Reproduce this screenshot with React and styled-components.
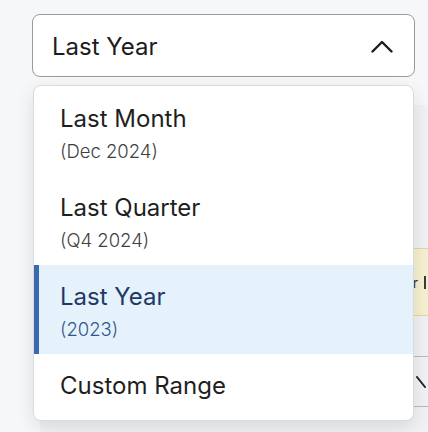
import React, { useState } from 'react';
import styled, { createGlobalStyle } from 'styled-components';

const GlobalStyle = createGlobalStyle`
  html, body {
    margin: 0;
    height: 432px;
    overflow: hidden;
    background: #f6f7f9;
    font-family: Inter, "Noto Sans", "Liberation Sans", sans-serif;
  }
`;

const Page = styled.div`
  padding: 14px 0 0 32px;
`;

const Select = styled.div`
  position: relative;
  width: 383px;
  z-index: 2;
`;

const Trigger = styled.button`
  box-sizing: border-box;
  width: 100%;
  height: 63px;
  display: flex;
  align-items: center;
  justify-content: space-between;
  padding: 2px 21px 0 19px;
  background: #fff;
  border: 1px solid #999a9c;
  border-radius: 8px;
  font-family: inherit;
  font-size: 24px;
  color: #1c1c1c;
  cursor: pointer;
`;

const Menu = styled.ul`
  position: absolute;
  top: 71px;
  left: 1px;
  width: 381px;
  box-sizing: border-box;
  margin: 0;
  padding: 1px 0 0;
  list-style: none;
  background: #fff;
  border: 1px solid #dadbdd;
  border-radius: 8px;
  box-shadow: 0 6px 18px rgba(0, 0, 0, 0.1);
  overflow: hidden;
`;

const Option = styled.li`
  position: relative;
  padding: 17px 20px 14px 26px;
  background: ${(p) => (p.$active ? '#e5f2fc' : 'transparent')};
  cursor: pointer;

  &:last-child {
    padding-top: 17px;
    padding-bottom: 19px;
  }

  &::before {
    content: '';
    display: ${(p) => (p.$active ? 'block' : 'none')};
    position: absolute;
    left: 0;
    top: 0;
    bottom: 0;
    width: 5px;
    background: #3c68ac;
  }
`;

const Title = styled.div`
  font-size: 24px;
  line-height: 30px;
  color: ${(p) => (p.$active ? '#1f3966' : '#1f1f1f')};
`;

const Sub = styled.div`
  margin-top: 6px;
  font-size: 18.5px;
  font-weight: 300;
  line-height: 22px;
  color: ${(p) => (p.$active ? '#34568c' : '#3f3f3f')};
`;

const Panel = styled.div`
  margin: 28px 0 0 8px;
  height: 340px;
  background: #f0f1f3;
`;

const TableRow = styled.div`
  box-sizing: border-box;
  display: flex;
  justify-content: flex-end;
  align-items: center;
  gap: 6px;
  padding-right: 2px;
  height: ${(p) => p.$h}px;
  background: ${(p) => p.$bg || 'transparent'};
  border-top: ${(p) => (p.$line ? `1px solid ${p.$line}` : 'none')};
  border-bottom: ${(p) => (p.$lineBottom ? `1px solid ${p.$lineBottom}` : 'none')};
  font-size: 14px;
  color: #333;
`;

const Cursor = styled.span`
  width: 2px;
  height: 13px;
  background: #3a3a3a;
`;

const ChevronUp = () => (
  <svg width="22" height="13" viewBox="0 0 22 13" fill="none">
    <polyline points="1.5,11.5 11,2 20.5,11.5" stroke="#1c1c1c" strokeWidth="2.4" strokeLinecap="round" strokeLinejoin="round" />
  </svg>
);

const Slash = () => (
  <svg width="10" height="12" viewBox="0 0 10 12" fill="none">
    <line x1="1" y1="1" x2="9" y2="11" stroke="#222" strokeWidth="2" strokeLinecap="round" />
  </svg>
);

const options = [
  { label: 'Last Month', sub: '(Dec 2024)' },
  { label: 'Last Quarter', sub: '(Q4 2024)' },
  { label: 'Last Year', sub: '(2023)' },
  { label: 'Custom Range' },
];

export default function App() {
  const [selected, setSelected] = useState('Last Year');
  const [open, setOpen] = useState(true);

  return (
    <Page>
      <GlobalStyle />
      <Select>
        <Trigger onClick={() => setOpen(!open)}>
          {selected}
          <ChevronUp />
        </Trigger>
        {open && (
          <Menu>
            {options.map((o) => (
              <Option
                key={o.label}
                $active={o.label === selected}
                onClick={() => setSelected(o.label)}
              >
                <Title $active={o.label === selected}>{o.label}</Title>
                {o.sub && <Sub $active={o.label === selected}>{o.sub}</Sub>}
              </Option>
            ))}
          </Menu>
        )}
      </Select>
      <Panel>
        <TableRow $h={143} />
        <TableRow $h={68} $bg="#f6f0d2" $line="#e2d59c" $lineBottom="#e2d59c">
          <span>r</span>
          <Cursor />
        </TableRow>
        <TableRow $h={40} />
        <TableRow $h={51} $line="#b9babc" $lineBottom="#b9babc">
          <Slash />
        </TableRow>
      </Panel>
    </Page>
  );
}
